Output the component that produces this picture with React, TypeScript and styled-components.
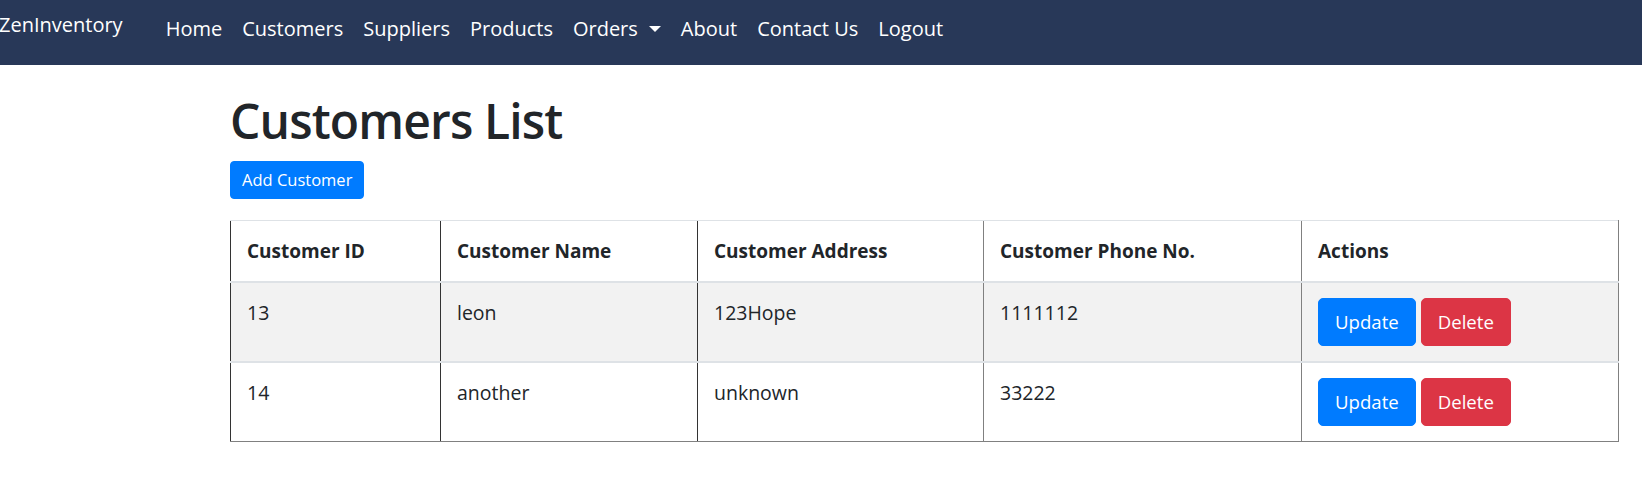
import { createGlobalStyle, styled } from "styled-components";

type Edge = "dark" | "gray";

const columns: { label: string; width: number; edge: Edge }[] = [
  { label: "Customer ID", width: 210, edge: "dark" },
  { label: "Customer Name", width: 257, edge: "dark" },
  { label: "Customer Address", width: 286, edge: "dark" },
  { label: "Customer Phone No.", width: 318, edge: "gray" },
  { label: "Actions", width: 317, edge: "gray" },
];

const customers = [
  { id: 13, name: "leon", address: "123Hope", phone: "1111112" },
  { id: 14, name: "another", address: "unknown", phone: "33222" },
];

const navLinks = ["Home", "Customers", "Suppliers", "Products", "Orders", "About", "Contact Us", "Logout"];

const App = () => {
  return (
    <>
      <GlobalStyle />
      <Navbar>
        <Brand href="#">ZenInventory</Brand>
        <NavList>
          {navLinks.map((link) => (
            <NavItem key={link}>
              <NavLink href="#">
                {link}
                {link === "Orders" && <Caret />}
              </NavLink>
            </NavItem>
          ))}
        </NavList>
      </Navbar>
      <Main>
        <Title>Customers List</Title>
        <AddButton>Add Customer</AddButton>
        <Table>
          <colgroup>
            {columns.map((col) => (
              <col key={col.label} style={{ width: col.width }} />
            ))}
          </colgroup>
          <thead>
            <tr>
              {columns.map((col, i) => (
                <HeadCell key={col.label} $edge={col.edge} $last={i === columns.length - 1}>
                  {col.label}
                </HeadCell>
              ))}
            </tr>
          </thead>
          <tbody>
            {customers.map((c, r) => {
              const last = r === customers.length - 1;
              const values = [String(c.id), c.name, c.address, c.phone];
              return (
                <Row key={c.id} $striped={r % 2 === 0}>
                  {values.map((v, i) => (
                    <Cell key={i} $edge={columns[i].edge} $lastRow={last}>
                      {v}
                    </Cell>
                  ))}
                  <Cell $edge="gray" $lastRow={last} $last>
                    <ActionButton $variant="primary">Update</ActionButton>
                    <ActionButton $variant="danger">Delete</ActionButton>
                  </Cell>
                </Row>
              );
            })}
          </tbody>
        </Table>
      </Main>
    </>
  );
};

const GlobalStyle = createGlobalStyle`
  * { box-sizing: border-box; }
  body {
    margin: 0;
    background: #fff;
    color: #212529;
    font-family: "Open Sans", "Noto Sans", sans-serif;
  }
`;

const Navbar = styled.nav`
  height: 65px;
  background-color: #283858;
  display: flex;
  align-items: flex-start;
`;

const Brand = styled.a`
  margin-left: -1px;
  padding-top: 10px;
  font-size: 20px;
  line-height: 30px;
  color: #fff;
  text-decoration: none;
`;

const NavList = styled.ul`
  display: flex;
  list-style: none;
  margin: 0 0 0 33px;
  padding: 14px 0 0;
`;

const NavItem = styled.li``;

const NavLink = styled.a`
  display: block;
  padding: 0 10px;
  font-size: 20px;
  line-height: 30px;
  color: #fff;
  text-decoration: none;
`;

const Caret = styled.span`
  display: inline-block;
  margin-left: 11px;
  vertical-align: 4px;
  border-top: 6px solid #fff;
  border-left: 6px solid transparent;
  border-right: 6px solid transparent;
`;

const Main = styled.main`
  padding: 27px 24px 0 230px;
`;

const Title = styled.h1`
  margin: 0 0 11px;
  font-size: 48px;
  font-weight: 600;
  line-height: 1.2;
  color: #212529;
  letter-spacing: -0.85px;
`;

const AddButton = styled.button`
  display: block;
  height: 38px;
  padding: 0 11px;
  border: 1px solid #007bff;
  border-radius: 4px;
  background: #007bff;
  color: #fff;
  font-family: inherit;
  font-size: 16.5px;
  line-height: 24px;
`;

const Table = styled.table`
  margin-top: 21px;
  width: 100%;
  table-layout: fixed;
  border-collapse: collapse;
  font-size: 19.5px;
  line-height: 30px;
`;

const edgeColor = (edge: Edge) => (edge === "dark" ? "#333" : "#808080");

const HeadCell = styled.th<{ $edge: Edge; $last?: boolean }>`
  padding: 15px 16px;
  text-align: left;
  font-size: 19px;
  font-weight: 700;
  color: #212529;
  border-top: 1px solid #dee2e6;
  border-bottom: 2px solid #dee2e6;
  border-left: 1px solid ${(p) => edgeColor(p.$edge)};
  border-right: ${(p) => (p.$last ? "1px solid #808080" : "none")};
`;

const Row = styled.tr<{ $striped: boolean }>`
  background-color: ${(p) => (p.$striped ? "#f2f2f2" : "#fff")};
`;

const Cell = styled.td<{ $edge: Edge; $lastRow: boolean; $last?: boolean }>`
  padding: 15px 16px;
  vertical-align: top;
  white-space: nowrap;
  border-bottom: ${(p) => (p.$lastRow ? "1px solid #808080" : "2px solid #dee2e6")};
  border-left: 1px solid ${(p) => edgeColor(p.$edge)};
  border-right: ${(p) => (p.$last ? "1px solid #808080" : "none")};
`;

const ActionButton = styled.button<{ $variant: "primary" | "danger" }>`
  display: inline-block;
  vertical-align: top;
  margin-right: 5px;
  padding: 8px 16px;
  border: 1px solid ${(p) => (p.$variant === "primary" ? "#007bff" : "#dc3545")};
  border-radius: 5px;
  background: ${(p) => (p.$variant === "primary" ? "#007bff" : "#dc3545")};
  color: #fff;
  font-family: inherit;
  font-size: 18.6px;
  line-height: 30px;
`;

export default App;
